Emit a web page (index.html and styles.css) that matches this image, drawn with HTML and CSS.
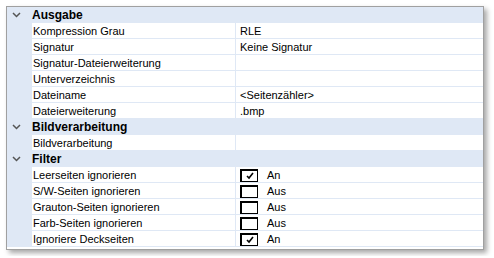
FILE: index.html
```html
<!DOCTYPE html>
<html lang="de">
<head>
    <meta charset="UTF-8">
    <title>Eigenschaften</title>
    <link rel="stylesheet" href="styles.css">
</head>
<body>
    <div class="grid">
        <div class="category"><span class="toggle"><svg width="9" height="6" viewBox="0 0 9 6"><path d="M1 1 L4.5 4.5 L8 1" fill="none" stroke="#555" stroke-width="1.5"/></svg></span><span class="cat-name">Ausgabe</span></div>
        <div class="prop"><span class="gutter"></span><span class="name">Kompression Grau</span><span class="value">RLE</span></div>
        <div class="prop"><span class="gutter"></span><span class="name">Signatur</span><span class="value">Keine Signatur</span></div>
        <div class="prop"><span class="gutter"></span><span class="name">Signatur-Dateierweiterung</span><span class="value"></span></div>
        <div class="prop"><span class="gutter"></span><span class="name">Unterverzeichnis</span><span class="value"></span></div>
        <div class="prop"><span class="gutter"></span><span class="name">Dateiname</span><span class="value">&lt;Seitenzähler&gt;</span></div>
        <div class="prop"><span class="gutter"></span><span class="name">Dateierweiterung</span><span class="value">.bmp</span></div>

        <div class="category"><span class="toggle"><svg width="9" height="6" viewBox="0 0 9 6"><path d="M1 1 L4.5 4.5 L8 1" fill="none" stroke="#555" stroke-width="1.5"/></svg></span><span class="cat-name">Bildverarbeitung</span></div>
        <div class="prop"><span class="gutter"></span><span class="name">Bildverarbeitung</span><span class="value"></span></div>

        <div class="category"><span class="toggle"><svg width="9" height="6" viewBox="0 0 9 6"><path d="M1 1 L4.5 4.5 L8 1" fill="none" stroke="#555" stroke-width="1.5"/></svg></span><span class="cat-name">Filter</span></div>
        <div class="prop"><span class="gutter"></span><span class="name">Leerseiten ignorieren</span><span class="value"><span class="check on"><svg width="10" height="8" viewBox="0 0 10 8"><path d="M2 4 L4 6 L8 1" fill="none" stroke="#000" stroke-width="1.6"/></svg></span>An</span></div>
        <div class="prop"><span class="gutter"></span><span class="name">S/W-Seiten ignorieren</span><span class="value"><span class="check"></span>Aus</span></div>
        <div class="prop"><span class="gutter"></span><span class="name">Grauton-Seiten ignorieren</span><span class="value"><span class="check"></span>Aus</span></div>
        <div class="prop"><span class="gutter"></span><span class="name">Farb-Seiten ignorieren</span><span class="value"><span class="check"></span>Aus</span></div>
        <div class="prop"><span class="gutter"></span><span class="name">Ignoriere Deckseiten</span><span class="value"><span class="check on"><svg width="10" height="8" viewBox="0 0 10 8"><path d="M2 4 L4 6 L8 1" fill="none" stroke="#000" stroke-width="1.6"/></svg></span>An</span></div>
    </div>
</body>
</html>
```

FILE: styles.css
```css
/* Property grid */
body {
    margin: 0;
    padding: 6px;
    background-color: #ffffff;
    font-family: 'Liberation Sans', Arial, sans-serif;
    font-size: 11px;
    color: #000;
}

.grid {
    width: 476px;
    height: 242px;
    border: 1px solid #a0a0a0;
    background-color: #ffffff;
    box-shadow: 3px 3px 5px rgba(0, 0, 0, 0.35);
    overflow: hidden;
}

.category {
    display: flex;
    align-items: center;
    height: 16px;
    background-color: #dfe8f5;
}

.toggle {
    width: 25px;
    box-sizing: border-box;
    padding-left: 5px;
    display: flex;
}

.cat-name {
    font-weight: bold;
    font-size: 12px;
}

.prop {
    display: flex;
    height: 16px;
}

.gutter {
    width: 25px;
    flex-shrink: 0;
    background-color: #dfe8f5;
}

.name,
.value {
    display: flex;
    align-items: center;
    box-sizing: border-box;
    border-bottom: 1px solid #dfe8f5;
    padding-top: 1px;
}

.name {
    width: 204px;
    padding-left: 1px;
    border-right: 1px solid #dfe8f5;
}

.value {
    flex: 1;
    padding-left: 4px;
}

.check {
    width: 18px;
    height: 13px;
    box-sizing: border-box;
    border: 1px solid #000;
    border-top-width: 2px;
    border-left-width: 2px;
    background-color: #fff;
    margin-right: 9px;
    display: flex;
    align-items: center;
    justify-content: center;
}
```
